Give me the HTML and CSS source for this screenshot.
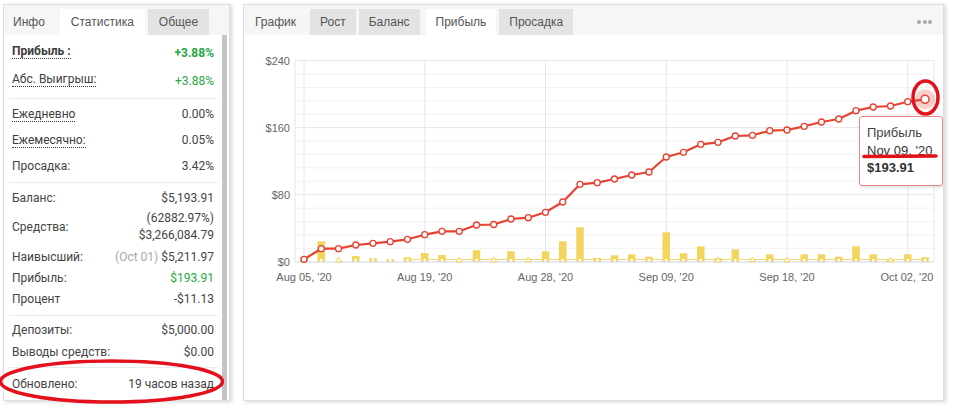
FILE: index.html
```html
<!DOCTYPE html>
<html lang="ru">
<head>
<meta charset="utf-8">
<title>Статистика</title>
<link rel="stylesheet" href="styles.css">
</head>
<body>
<div class="page">
  <section class="panel stats">
    <div class="tabs tabs-left">
      <div class="tab tab-plain">Инфо</div>
      <div class="tab tab-active">Статистика</div>
      <div class="tab">Общее</div>
    </div>
    <div class="stats-body">
      <div class="stats-content">
        <div class="group g1">
          <div class="row h28"><span class="lbl dotted strong">Прибыль :</span><span class="val green strong">+3.88%</span></div>
          <div class="row h28"><span class="lbl dotted">Абс. Выигрыш:</span><span class="val green">+3.88%</span></div>
        </div>
        <div class="group g2">
          <div class="row h26"><span class="lbl dotted">Ежедневно</span><span class="val">0.00%</span></div>
          <div class="row h26"><span class="lbl dotted">Ежемесячно:</span><span class="val">0.05%</span></div>
          <div class="row h26"><span class="lbl">Просадка:</span><span class="val">3.42%</span></div>
        </div>
        <div class="group g3">
          <div class="row h21"><span class="lbl">Баланс:</span><span class="val">$5,193.91</span></div>
          <div class="row h38"><span class="lbl">Средства:</span><span class="val two"><span>(62882.97%)</span><span>$3,266,084.79</span></span></div>
          <div class="row h21"><span class="lbl">Наивысший:</span><span class="val"><span class="muted">(Oct 01)</span> $5,211.97</span></div>
          <div class="row h21"><span class="lbl">Прибыль:</span><span class="val green">$193.91</span></div>
          <div class="row h21"><span class="lbl">Процент</span><span class="val">-$11.13</span></div>
        </div>
        <div class="group g4">
          <div class="row h22"><span class="lbl">Депозиты:</span><span class="val">$5,000.00</span></div>
          <div class="row h22"><span class="lbl">Выводы средств:</span><span class="val">$0.00</span></div>
        </div>
        <div class="group g5">
          <div class="row h22"><span class="lbl">Обновлено:</span><span class="val">19 часов назад</span></div>
          <div class="row h22"><span class="lbl">Сделки:</span><span class="val">0</span></div>
        </div>
      </div>
      <div class="scrollbar"></div>
    </div>
  </section>

  <section class="panel chart">
    <div class="tabs tabs-right">
      <div class="tab tab-plain">График</div>
      <div class="tab">Рост</div>
      <div class="tab">Баланс</div>
      <div class="tab tab-active">Прибыль</div>
      <div class="tab">Просадка</div>
      <div class="more"><i></i><i></i><i></i></div>
    </div>
    <div class="chart-body">
      <svg class="plot" width="699" height="365" viewBox="244 35 699 365">
        <g class="minor">
          <line x1="295" x2="934" y1="74.1" y2="74.1"/>
          <line x1="295" x2="934" y1="87.5" y2="87.5"/>
          <line x1="295" x2="934" y1="100.9" y2="100.9"/>
          <line x1="295" x2="934" y1="114.3" y2="114.3"/>
          <line x1="295" x2="934" y1="141.1" y2="141.1"/>
          <line x1="295" x2="934" y1="154.5" y2="154.5"/>
          <line x1="295" x2="934" y1="167.9" y2="167.9"/>
          <line x1="295" x2="934" y1="181.3" y2="181.3"/>
          <line x1="295" x2="934" y1="208.1" y2="208.1"/>
          <line x1="295" x2="934" y1="221.5" y2="221.5"/>
          <line x1="295" x2="934" y1="234.9" y2="234.9"/>
          <line x1="295" x2="934" y1="248.3" y2="248.3"/>
        </g>
        <g class="major">
          <line x1="295" x2="934" y1="60.7" y2="60.7"/>
          <line x1="295" x2="934" y1="127.7" y2="127.7"/>
          <line x1="295" x2="934" y1="194.7" y2="194.7"/>
          <line x1="295" x2="295" y1="60.7" y2="262"/>
          <line x1="934" x2="934" y1="60.7" y2="262"/>
          <line x1="304" x2="304" y1="60.7" y2="262"/>
          <line x1="424.75" x2="424.75" y1="60.7" y2="262"/>
          <line x1="545.5" x2="545.5" y1="60.7" y2="262"/>
          <line x1="666.25" x2="666.25" y1="60.7" y2="262"/>
          <line x1="787" x2="787" y1="60.7" y2="262"/>
          <line x1="907.75" x2="907.75" y1="60.7" y2="262"/>
        </g>
        <g class="bars">
          <rect x="300.25" y="257.3" width="7.5" height="4.7"/>
          <rect x="317.5" y="241.3" width="7.5" height="20.7"/>
          <rect x="352" y="256" width="7.5" height="6"/>
          <rect x="369.25" y="258.3" width="7.5" height="3.7"/>
          <rect x="386.5" y="259.3" width="7.5" height="2.7"/>
          <rect x="403.75" y="257.3" width="7.5" height="4.7"/>
          <rect x="421" y="253" width="7.5" height="9"/>
          <rect x="438.25" y="255" width="7.5" height="7"/>
          <rect x="472.75" y="250.3" width="7.5" height="11.7"/>
          <rect x="507.25" y="251.3" width="7.5" height="10.7"/>
          <rect x="541.75" y="251.3" width="7.5" height="10.7"/>
          <rect x="559" y="241.3" width="7.5" height="20.7"/>
          <rect x="576.25" y="227.3" width="7.5" height="34.7"/>
          <rect x="593.5" y="258" width="7.5" height="4"/>
          <rect x="610.75" y="255.3" width="7.5" height="6.7"/>
          <rect x="628" y="254.3" width="7.5" height="7.7"/>
          <rect x="645.25" y="256.7" width="7.5" height="5.3"/>
          <rect x="662.5" y="232.3" width="7.5" height="29.7"/>
          <rect x="679.75" y="253.3" width="7.5" height="8.7"/>
          <rect x="697" y="246.3" width="7.5" height="15.7"/>
          <rect x="714.25" y="258.3" width="7.5" height="3.7"/>
          <rect x="731.5" y="249.3" width="7.5" height="12.7"/>
          <rect x="766" y="254.3" width="7.5" height="7.7"/>
          <rect x="800.5" y="254.3" width="7.5" height="7.7"/>
          <rect x="817.75" y="254.3" width="7.5" height="7.7"/>
          <rect x="835" y="256.7" width="7.5" height="5.3"/>
          <rect x="852.25" y="246.3" width="7.5" height="15.7"/>
          <rect x="869.5" y="254.3" width="7.5" height="7.7"/>
          <rect x="886.75" y="260" width="7.5" height="2"/>
          <rect x="904" y="254.3" width="7.5" height="7.7"/>
          <rect x="921.25" y="257.3" width="7.5" height="4.7"/>
        </g>
        <line class="baseline" x1="295" x2="934" y1="262" y2="262"/>
        <line class="thin" x1="407" x2="925" y1="259.5" y2="259.5"/>
        <g class="sq">
          <rect x="320" y="259" width="2.5" height="2.5"/>
          <rect x="354.5" y="259" width="2.5" height="2.5"/>
          <rect x="371.75" y="259" width="2.5" height="2.5"/>
          <rect x="389" y="259" width="2.5" height="2.5"/>
          <rect x="406.25" y="259" width="2.5" height="2.5"/>
          <rect x="423.5" y="259" width="2.5" height="2.5"/>
          <rect x="440.75" y="259" width="2.5" height="2.5"/>
          <rect x="475.25" y="259" width="2.5" height="2.5"/>
          <rect x="509.75" y="259" width="2.5" height="2.5"/>
          <rect x="544.25" y="259" width="2.5" height="2.5"/>
          <rect x="561.5" y="259" width="2.5" height="2.5"/>
          <rect x="578.75" y="259" width="2.5" height="2.5"/>
          <rect x="596" y="259" width="2.5" height="2.5"/>
          <rect x="613.25" y="259" width="2.5" height="2.5"/>
          <rect x="630.5" y="259" width="2.5" height="2.5"/>
          <rect x="647.75" y="259" width="2.5" height="2.5"/>
          <rect x="665" y="259" width="2.5" height="2.5"/>
          <rect x="682.25" y="259" width="2.5" height="2.5"/>
          <rect x="699.5" y="259" width="2.5" height="2.5"/>
          <rect x="734" y="259" width="2.5" height="2.5"/>
          <rect x="768.5" y="259" width="2.5" height="2.5"/>
          <rect x="803" y="259" width="2.5" height="2.5"/>
          <rect x="820.25" y="259" width="2.5" height="2.5"/>
          <rect x="837.5" y="259" width="2.5" height="2.5"/>
          <rect x="854.75" y="259" width="2.5" height="2.5"/>
          <rect x="872" y="259" width="2.5" height="2.5"/>
          <rect x="906.5" y="259" width="2.5" height="2.5"/>
          <rect x="923.75" y="259" width="2.5" height="2.5"/>
        </g>
        <g class="tri">
          <path d="M301 262L307 262L304 257Z"/>
          <path d="M335.5 262L341.5 262L338.5 257Z"/>
          <path d="M456.25 262L462.25 262L459.25 257Z"/>
          <path d="M490.75 262L496.75 262L493.75 257Z"/>
          <path d="M525.25 262L531.25 262L528.25 257Z"/>
          <path d="M715 262L721 262L718 257Z"/>
          <path d="M749.5 262L755.5 262L752.5 257Z"/>
          <path d="M784 262L790 262L787 257Z"/>
          <path d="M887.5 262L893.5 262L890.5 257Z"/>
        </g>
        <polyline class="line" points="304,259.3 321.25,248.7 338.5,248.7 355.75,245 373,243.3 390.25,241.7 407.5,239.3 424.75,234.7 442,231.3 459.25,231.3 476.5,225 493.75,224.5 511,219 528.25,217.7 545.5,212.3 562.75,202 580,184.3 597.25,182.7 614.5,179 631.75,175 649,172 666.25,157 683.5,152.3 700.75,144.3 718,142.3 735.25,136 752.5,135.3 769.75,130.7 787,130 804.25,126.3 821.5,122 838.75,119 856,110.7 873.25,107 890.5,106 907.75,101.7 925,99.3"/>
        <g class="pts">
          <circle cx="304" cy="259.3" r="3"/>
          <circle cx="321.25" cy="248.7" r="3"/>
          <circle cx="338.5" cy="248.7" r="3"/>
          <circle cx="355.75" cy="245" r="3"/>
          <circle cx="373" cy="243.3" r="3"/>
          <circle cx="390.25" cy="241.7" r="3"/>
          <circle cx="407.5" cy="239.3" r="3"/>
          <circle cx="424.75" cy="234.7" r="3"/>
          <circle cx="442" cy="231.3" r="3"/>
          <circle cx="459.25" cy="231.3" r="3"/>
          <circle cx="476.5" cy="225" r="3"/>
          <circle cx="493.75" cy="224.5" r="3"/>
          <circle cx="511" cy="219" r="3"/>
          <circle cx="528.25" cy="217.7" r="3"/>
          <circle cx="545.5" cy="212.3" r="3"/>
          <circle cx="562.75" cy="202" r="3"/>
          <circle cx="580" cy="184.3" r="3"/>
          <circle cx="597.25" cy="182.7" r="3"/>
          <circle cx="614.5" cy="179" r="3"/>
          <circle cx="631.75" cy="175" r="3"/>
          <circle cx="649" cy="172" r="3"/>
          <circle cx="666.25" cy="157" r="3"/>
          <circle cx="683.5" cy="152.3" r="3"/>
          <circle cx="700.75" cy="144.3" r="3"/>
          <circle cx="718" cy="142.3" r="3"/>
          <circle cx="735.25" cy="136" r="3"/>
          <circle cx="752.5" cy="135.3" r="3"/>
          <circle cx="769.75" cy="130.7" r="3"/>
          <circle cx="787" cy="130" r="3"/>
          <circle cx="804.25" cy="126.3" r="3"/>
          <circle cx="821.5" cy="122" r="3"/>
          <circle cx="838.75" cy="119" r="3"/>
          <circle cx="856" cy="110.7" r="3"/>
          <circle cx="873.25" cy="107" r="3"/>
          <circle cx="890.5" cy="106" r="3"/>
          <circle cx="907.75" cy="101.7" r="3"/>
        </g>
        <circle class="halo" cx="925" cy="99.3" r="10"/>
        <circle class="hover" cx="925" cy="99.3" r="4"/>
        <g class="ylab">
          <text x="290" y="65">$240</text>
          <text x="290" y="132">$160</text>
          <text x="290" y="199">$80</text>
          <text x="290" y="266">$0</text>
        </g>
        <g class="xlab">
          <text x="304" y="281">Aug 05, '20</text>
          <text x="424.75" y="281">Aug 19, '20</text>
          <text x="545.5" y="281">Aug 28, '20</text>
          <text x="666.25" y="281">Sep 09, '20</text>
          <text x="787" y="281">Sep 18, '20</text>
          <text x="907" y="281">Oct 02, '20</text>
        </g>
      </svg>
      <div class="tooltip">
        <div class="tt-head">Прибыль</div>
        <div class="tt-date">Nov 09, '20</div>
        <div class="tt-val">$193.91</div>
      </div>
    </div>
  </section>
</div>

<svg class="marks" width="956" height="410" viewBox="0 0 956 410">
  <ellipse cx="925.5" cy="97.5" rx="12.5" ry="16.5"/>
  <line x1="864" y1="156.5" x2="936" y2="156"/>
  <ellipse cx="111.5" cy="381.5" rx="111" ry="20.5"/>
</svg>
</body>
</html>
```

FILE: styles.css
```css
* { box-sizing: border-box; }

html, body {
  margin: 0;
  padding: 0;
  background: #fff;
}

body {
  width: 956px;
  height: 410px;
  overflow: hidden;
  position: relative;
  font-family: "Liberation Sans", Arial, sans-serif;
  color: #444;
}

.page {
  display: flex;
  align-items: flex-start;
  padding: 4px 0 0 3px;
  gap: 13px;
}

.panel {
  height: 397px;
  border: 1px solid #dedede;
  background: #fff;
  box-shadow: 2px 1px 4px rgba(0, 0, 0, 0.16);
  overflow: hidden;
}

.stats { width: 227px; }
.chart { width: 701px; }

/* Tabs */
.tabs {
  height: 30px;
  background: #f6f6f6;
  display: flex;
  align-items: flex-end;
  gap: 3px;
}

.tab {
  height: 26px;
  line-height: 26px;
  padding: 0 10px;
  font-size: 12px;
  color: #555;
  background: #e3e3e3;
  white-space: nowrap;
}

.tabs-left .tab { padding: 0 11px; }
.tabs-left .tab-plain { padding: 0 9px; margin-right: 3px; }
.tabs-right .tab-plain { padding: 0 11px; margin-right: 0; }
.tabs-right .tab-active { margin-left: 3px; }

.tab-plain { background: transparent; }
.tab-active { background: #fff; }

.more {
  margin-left: auto;
  margin-right: 11px;
  align-self: center;
  margin-bottom: -3px;
  display: flex;
  gap: 1.5px;
}

.more i {
  display: block;
  width: 4px;
  height: 4px;
  border-radius: 50%;
  background: #a9a9a9;
}

/* Stats panel */
.stats-body {
  height: 365px;
  display: flex;
  overflow: hidden;
}

.stats-content {
  flex: 1;
  padding: 0 4px 0 5px;
  font-family: Roboto, "Liberation Sans", sans-serif;
  font-size: 12px;
}

.scrollbar {
  width: 5px;
  margin-right: 2px;
  background: #c4c4c4;
}

.group { border-bottom: 1px solid #ebebeb; }
.g1 { padding: 2px 0 5px; }
.g2 { padding: 2px 0 3px; }
.g3 { padding: 4px 0 6px; }
.g4 { padding: 3px 0 4px; }
.g5 { padding: 5px 0 0; border-bottom: 0; }

.row {
  display: flex;
  align-items: center;
  justify-content: space-between;
  padding: 0 4px 0 3px;
}

.h28 { height: 28px; }
.h26 { height: 26px; }
.h21 { height: 21px; }
.h22 { height: 22px; }
.h38 { height: 38px; }

.lbl {
  color: #444;
  white-space: nowrap;
}

.dotted {
  display: inline-block;
  line-height: 14px;
  border-bottom: 1px dotted #333;
  color: #3d3d3d;
}

.strong { font-weight: 700; }

.g1 .val { margin-top: 4px; }

.val {
  color: #444;
  text-align: right;
  white-space: nowrap;
}

.two {
  display: flex;
  flex-direction: column;
  align-items: flex-end;
  line-height: 17px;
}

.green { color: #1fa845; }
.muted { color: #a8a8a8; }

/* Chart */
.chart-body {
  position: relative;
  height: 366px;
}

.plot { display: block; }

.minor line { stroke: #f2f2f2; stroke-width: 1; }
.major line { stroke: #e6e6e6; stroke-width: 1; }
.baseline { stroke: #ccd6eb; stroke-width: 1; }

.bars rect { fill: #f3d45c; }
.thin { stroke: #f2d870; stroke-width: 1; }
.sq rect { fill: #fff; }
.tri path { fill: #fffbe8; stroke: #efd262; stroke-width: 1; }

.line {
  fill: none;
  stroke: #e8412f;
  stroke-width: 2.2;
  stroke-linejoin: round;
}

.pts circle {
  fill: #fff;
  stroke: #e8412f;
  stroke-width: 1.3;
}

.halo { fill: rgba(232, 65, 47, 0.25); }
.hover { fill: #fff; stroke: #e8412f; stroke-width: 1.5; }

.ylab text, .xlab text {
  font-family: "Liberation Sans", Arial, sans-serif;
  font-size: 11px;
  fill: #666;
}

.ylab text { text-anchor: end; }
.xlab text { text-anchor: middle; }

.tooltip {
  position: absolute;
  left: 615px;
  top: 81px;
  width: 84px;
  height: 70px;
  padding: 7px 7px;
  background: rgba(255, 255, 255, 0.96);
  border: 1px solid #ec8a80;
  border-radius: 3px;
  box-shadow: 1px 1px 3px rgba(0, 0, 0, 0.16);
  font-family: "Liberation Sans", Arial, sans-serif;
  color: #333;
  font-size: 13px;
  line-height: 17.5px;
}

.tt-head { color: #444; }
.tt-val { font-weight: 700; }

/* Annotation overlay */
.marks {
  position: absolute;
  left: 0;
  top: 0;
  pointer-events: none;
}

.marks ellipse, .marks line {
  fill: none;
  stroke: #e4111c;
  stroke-width: 3.5;
  stroke-linecap: round;
}
```
